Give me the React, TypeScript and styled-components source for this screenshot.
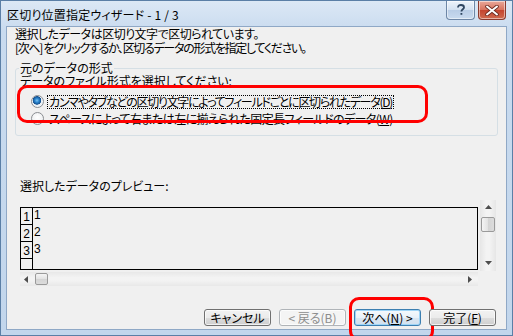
import styled, { createGlobalStyle } from 'styled-components';

const GlobalStyle = createGlobalStyle`
  html, body {
    margin: 0;
    padding: 0;
    background: #ffffff;
  }
`;

const Window = styled.div`
  width: 513px;
  height: 336px;
  box-sizing: border-box;
  display: flex;
  flex-direction: column;
  background: linear-gradient(to bottom, #dce8f5 0px, #c9dbef 30px, #c2d6ec 100%);
  border: 1px solid #5b7fa6;
  font-family: "Noto Sans CJK JP", "Noto Sans", sans-serif;
  font-size: 12px;
  font-feature-settings: "palt" 1;
  color: #000;
`;

const TitleBar = styled.div`
  height: 25px;
  display: flex;
  align-items: flex-start;
  padding: 0 6px 0 6px;
`;

const Title = styled.div`
  line-height: 27px;
  font-size: 12px;
  letter-spacing: 0.2px;
`;

const TitleButtons = styled.div`
  margin-left: auto;
  display: flex;
  gap: 3px;
`;

const CaptionButton = styled.div<{ $close?: boolean }>`
  width: ${(p) => (p.$close ? 28 : 29)}px;
  height: 19px;
  box-sizing: border-box;
  border: 1px solid ${(p) => (p.$close ? '#8a3a2e' : '#6d86a6')};
  border-top: none;
  border-radius: 0 0 4px 4px;
  display: flex;
  align-items: center;
  justify-content: center;
  background: ${(p) =>
    p.$close
      ? 'linear-gradient(to bottom, #e9a99b 0%, #d8735f 48%, #c4452f 52%, #cf6a4f 100%)'
      : 'linear-gradient(to bottom, #eef4fb 0%, #d3e1f1 48%, #b9cde6 52%, #c9dbef 100%)'};
  box-shadow: inset 0 0 0 1px rgba(255, 255, 255, 0.5);
`;

const Client = styled.div`
  flex: 1;
  margin: 0 5px 5px;
  background: #f0f0f0;
  border: 1px solid #8fa8c6;
  display: flex;
  flex-direction: column;
`;

const Intro = styled.div`
  padding-left: 8px;
  line-height: 14px;
`;

const IntroLine = styled.div<{ $ls: number }>`
  letter-spacing: ${(p) => p.$ls}px;
  white-space: nowrap;
`;

const GroupBox = styled.fieldset`
  margin: 6px 8px 0;
  padding: 0 0 8px 0;
  min-width: 0;
  border: 1px solid #d5dfe5;
  border-radius: 3px;
`;

const Legend = styled.legend`
  margin-left: 3px;
  padding: 0 1px;
  line-height: 14px;
`;

const Prompt = styled.div`
  padding-left: 4px;
  line-height: 12px;
`;

const RadioList = styled.div`
  position: relative;
  margin-top: 6px;
`;

const RadioRow = styled.div`
  height: 17px;
  display: flex;
  align-items: center;
  padding-left: 15px;
`;

const RadioDot = styled.span<{ $checked?: boolean }>`
  width: 13px;
  height: 13px;
  box-sizing: border-box;
  border-radius: 50%;
  border: 1px solid #8b8e92;
  background: ${(p) =>
    p.$checked
      ? 'radial-gradient(circle at 45% 40%, #7fc4f2 0px, #2b86cf 2px, #15508f 4px, #e9eef3 4.5px, #f9fbfc 100%)'
      : 'radial-gradient(circle at 50% 40%, #ffffff 0px, #e6e8ea 100%)'};
  flex-shrink: 0;
`;

const RadioText = styled.span<{ $focused?: boolean; $ls: number }>`
  margin-left: 3px;
  padding: 0 1px;
  line-height: 12px;
  letter-spacing: ${(p) => p.$ls}px;
  border: 1px dotted ${(p) => (p.$focused ? '#000' : 'transparent')};
  white-space: nowrap;
`;

const Key = styled.span`
  text-decoration: underline;
`;

const Highlight = styled.div`
  position: absolute;
  border: 3px solid #ff0000;
  border-radius: 10px;
  pointer-events: none;
`;

const PreviewLabel = styled.div`
  margin-top: 43px;
  padding-left: 13px;
  line-height: 14px;
`;

const PreviewRow = styled.div`
  margin-top: 14px;
  padding-left: 13px;
  display: flex;
  align-items: flex-start;
  gap: 2px;
`;

const PreviewColumn = styled.div`
  display: flex;
  flex-direction: column;
`;

const PreviewBox = styled.div`
  width: 458px;
  height: 63px;
  box-sizing: border-box;
  border: 1px solid #000;
  display: flex;
`;

const RowNumbers = styled.div`
  width: 12px;
  box-sizing: border-box;
  border-right: 1px solid #000;
  display: flex;
  flex-direction: column;
`;

const RowNumber = styled.div<{ $last?: boolean }>`
  height: ${(p) => (p.$last ? 'auto' : '16px')};
  flex: ${(p) => (p.$last ? 1 : 'none')};
  border-bottom: ${(p) => (p.$last ? 'none' : '1px solid #000')};
  font-family: "Liberation Sans", sans-serif;
  font-size: 12px;
  line-height: 19px;
  text-align: center;
  overflow: hidden;
`;

const DataLines = styled.div`
  padding-left: 1px;
  font-family: "Liberation Sans", sans-serif;
  font-size: 12px;
  display: flex;
  flex-direction: column;
`;

const DataLine = styled.div`
  height: 17px;
  line-height: 15px;
`;

const VScroll = styled.div`
  width: 16px;
  height: 71px;
  margin-top: -7px;
  display: flex;
  flex-direction: column;
  align-items: center;
  background: linear-gradient(to right, #e6e6e6, #f3f3f3 40%, #f3f3f3 60%, #e6e6e6);
  padding: 5px 0 6px;
  box-sizing: border-box;
`;

const HScroll = styled.div`
  width: 458px;
  height: 14px;
  margin-top: 2px;
  box-sizing: border-box;
  display: flex;
  align-items: center;
  padding: 0 6px 0 4px;
  background: linear-gradient(to bottom, #e8e8e8, #f3f3f3 40%, #f3f3f3 60%, #e8e8e8);
`;

const Thumb = styled.div<{ $vertical?: boolean }>`
  width: ${(p) => (p.$vertical ? 14 : 13)}px;
  height: ${(p) => (p.$vertical ? 15 : 12)}px;
  margin: ${(p) => (p.$vertical ? '8px 0 0 0' : '0 0 0 7px')};
  box-sizing: border-box;
  border: 1px solid #9a9a9a;
  border-radius: 2px;
  background: ${(p) =>
    p.$vertical
      ? 'linear-gradient(to right, #f4f4f4, #e2e2e2 50%, #d4d4d4 51%, #dcdcdc)'
      : 'linear-gradient(to bottom, #f4f4f4, #e2e2e2 50%, #d4d4d4 51%, #dcdcdc)'};
`;

const Spacer = styled.div`
  flex: 1;
`;

const ButtonBar = styled.div`
  margin-top: 23px;
  padding-right: 10px;
  display: flex;
  justify-content: flex-end;
  gap: 8px;
`;

const ButtonWrap = styled.div`
  position: relative;
`;

const Button = styled.div<{ $default?: boolean; $disabled?: boolean }>`
  width: 67px;
  height: 17px;
  box-sizing: border-box;
  border: 1px solid ${(p) => (p.$disabled ? '#b0b4b8' : p.$default ? '#3c7fb1' : '#707070')};
  border-radius: 3px;
  background: ${(p) =>
    p.$disabled
      ? '#f4f4f4'
      : p.$default
      ? 'linear-gradient(to bottom, #f6fafd 0%, #e9f1f9 50%, #d9e6f2 51%, #d2e1ef 100%)'
      : 'linear-gradient(to bottom, #f2f2f2 0%, #ebebeb 50%, #dddddd 51%, #cfcfcf 100%)'};
  box-shadow: inset 0 0 0 1px ${(p) => (p.$default ? '#9fd5f7' : 'rgba(255,255,255,0.7)')};
  color: ${(p) => (p.$disabled ? '#8d8d8d' : '#000')};
  display: flex;
  align-items: center;
  justify-content: center;
  line-height: 15px;
  white-space: nowrap;
`;

const Arrow = ({ dir }: { dir: 'up' | 'down' | 'left' | 'right' }) => {
  const pts = {
    up: '0,4 7,4 3.5,0',
    down: '0,0 7,0 3.5,4',
    left: '4,0 4,7 0,3.5',
    right: '0,0 0,7 4,3.5',
  }[dir];
  const horizontal = dir === 'left' || dir === 'right';
  return (
    <svg width={horizontal ? 4 : 7} height={horizontal ? 7 : 4} viewBox={horizontal ? '0 0 4 7' : '0 0 7 4'}>
      <polygon points={pts} fill="#4d4d4d" />
    </svg>
  );
};

const HelpGlyph = () => (
  <svg width="10" height="12" viewBox="0 0 10 12">
    <path d="M2 3.6 C2 1.6 3.4 1 5 1 C6.8 1 8 2 8 3.4 C8 5.2 5.4 5.4 5.4 7.6" fill="none" stroke="#2f4660" strokeWidth="1.8" />
    <rect x="4.5" y="9" width="1.8" height="1.8" fill="#2f4660" />
  </svg>
);

const CloseGlyph = () => (
  <svg width="14" height="11" viewBox="0 0 14 11">
    <path d="M2 1.5 L12 9.5 M12 1.5 L2 9.5" stroke="#6b2a20" strokeWidth="3.6" strokeLinecap="round" />
    <path d="M2 1.5 L12 9.5 M12 1.5 L2 9.5" stroke="#ffffff" strokeWidth="2" strokeLinecap="round" />
  </svg>
);

export default function App() {
  return (
    <>
      <GlobalStyle />
      <Window>
        <TitleBar>
          <Title>区切り位置指定ウィザード - 1 / 3</Title>
          <TitleButtons>
            <CaptionButton>
              <HelpGlyph />
            </CaptionButton>
            <CaptionButton $close>
              <CloseGlyph />
            </CaptionButton>
          </TitleButtons>
        </TitleBar>
        <Client>
          <Intro>
            <IntroLine $ls={-0.5}>選択したデータは区切り文字で区切られています。</IntroLine>
            <IntroLine $ls={-1.3}>[次へ] をクリックするか、区切るデータの形式を指定してください。</IntroLine>
          </Intro>
          <GroupBox>
            <Legend>元のデータの形式</Legend>
            <Prompt>データのファイル形式を選択してください:</Prompt>
            <RadioList>
              <RadioRow>
                <RadioDot $checked />
                <RadioText $focused $ls={-1.3}>
                  カンマやタブなどの区切り文字によってフィールドごとに区切られたデータ(<Key>D</Key>)
                </RadioText>
              </RadioRow>
              <RadioRow>
                <RadioDot />
                <RadioText $ls={-0.6}>
                  スペースによって右または左に揃えられた固定長フィールドのデータ(<Key>W</Key>)
                </RadioText>
              </RadioRow>
              <Highlight style={{ top: -8, left: 1, width: 405, height: 32 }} />
            </RadioList>
          </GroupBox>
          <PreviewLabel>選択したデータのプレビュー:</PreviewLabel>
          <PreviewRow>
            <PreviewColumn>
              <PreviewBox>
                <RowNumbers>
                  <RowNumber>1</RowNumber>
                  <RowNumber>2</RowNumber>
                  <RowNumber>3</RowNumber>
                  <RowNumber $last />
                </RowNumbers>
                <DataLines>
                  <DataLine>1</DataLine>
                  <DataLine>2</DataLine>
                  <DataLine>3</DataLine>
                </DataLines>
              </PreviewBox>
              <HScroll>
                <Arrow dir="left" />
                <Thumb />
                <Spacer />
                <Arrow dir="right" />
              </HScroll>
            </PreviewColumn>
            <VScroll>
              <Arrow dir="up" />
              <Thumb $vertical />
              <Spacer />
              <Arrow dir="down" />
            </VScroll>
          </PreviewRow>
          <ButtonBar>
            <ButtonWrap>
              <Button>キャンセル</Button>
            </ButtonWrap>
            <ButtonWrap>
              <Button $disabled>&lt; 戻る(B)</Button>
            </ButtonWrap>
            <ButtonWrap>
              <Button $default>
                次へ(<Key>N</Key>) &gt;
              </Button>
              <Highlight style={{ top: -12, left: -5, width: 79, height: 38 }} />
            </ButtonWrap>
            <ButtonWrap>
              <Button>
                完了(<Key>F</Key>)
              </Button>
            </ButtonWrap>
          </ButtonBar>
        </Client>
      </Window>
    </>
  );
}
